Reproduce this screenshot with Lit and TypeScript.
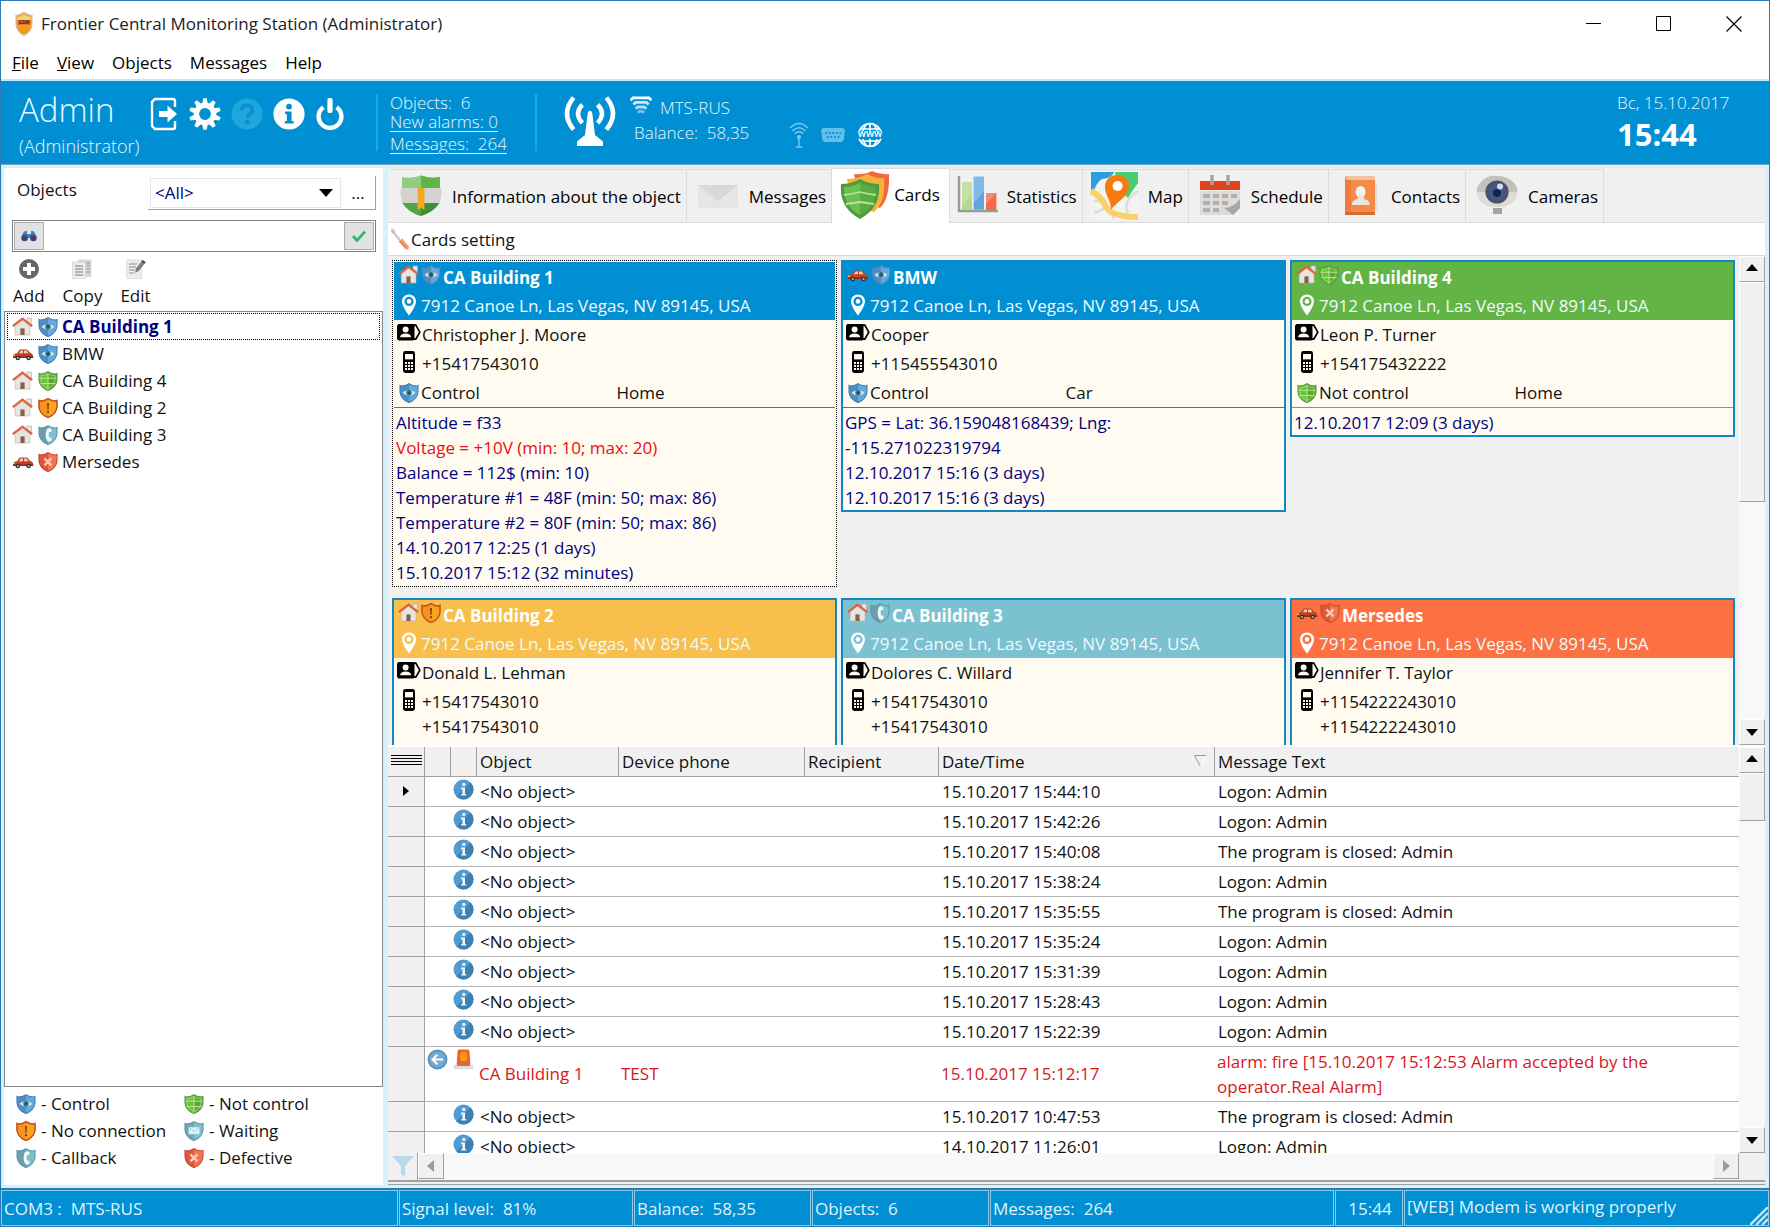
import { LitElement, html, css, svg, nothing, TemplateResult } from "lit";
import { customElement, property, state } from "lit/decorators.js";
import { classMap } from "lit/directives/class-map.js";

type Status = "control" | "free" | "lost" | "waiting" | "callback" | "defective";
type Kind = "home" | "car";

/* ---------- icons ---------- */

const icon = (w: number, h: number, box: string, body: unknown) =>
  html`<svg width=${w} height=${h} viewBox=${box} aria-hidden="true">${body}</svg>`;

const shieldTones: Record<Status, [string, string, string]> = {
  control: ["#4a8fc6", "#63a9df", "#4381b3"],
  free: ["#6cc13c", "#5aa92f", "#5d9a48"],
  lost: ["#f7941d", "#f9a51f", "#c65f1c"],
  waiting: ["#6fa9b6", "#7fc0d0", "#5a96a5"],
  callback: ["#6b9fae", "#7cc0d0", "#5f97a6"],
  defective: ["#e0563a", "#f5744e", "#c04a30"],
};

const outline = "M2 3C5 3 8 2 10 .6C12 2 15 3 18 3L19 2.4V9C18.6 14 15 17.6 10 19.6C5 17.6 1.4 14 1 9V2.4Z";
const half = "M10 .6C8 2 5 3 2 3L1 2.4V9C1.4 14 5 17.6 10 19.6Z";

const shieldMark = (status: Status) => {
  switch (status) {
    case "control":
      return svg`<path d="M3.6 9.8C6 6.4 14 6.4 16.4 9.8C14 13.2 6 13.2 3.6 9.8Z" fill="#cfe6ee"/>
        <circle cx="10" cy="9.8" r="2.7" fill="#35707c"/><circle cx="10" cy="9.8" r="1" fill="#1d4650"/>`;
    case "free":
      return svg`<path d="M1.5 7.2H18.5M2.4 12.6H17.6M10 2V19" stroke="#bfe79b" stroke-width="1" fill="none"/>
        <path d="M3 4.6C6 4.6 8 3.8 10 2.6C12 3.8 14 4.6 17 4.6V9C16.6 13 14 16 10 17.6C6 16 3.4 13 3 9Z" stroke="#a6dc7c" stroke-width=".8" fill="none"/>`;
    case "lost":
      return svg`<path d="M9.1 5H11L10.6 12H9.5Z" fill="#8a3d12"/><circle cx="10.1" cy="14.2" r="1.1" fill="#8a3d12"/>
        <path d="${outline}" fill="none" stroke="#c4571b" stroke-width="1.3"/>`;
    case "waiting":
      return svg`<path d="M4.6 6.2H15.4V13.2H4.6Z" fill="#e2f0f8"/><path d="M4.6 6.2L10 10.4L15.4 6.2" fill="none" stroke="#a9cfe0"/>`;
    case "callback":
      return svg`<path d="M9.6 3.4H12.6Q13.4 3.4 13.4 4.4V6Q13.4 7 12.4 7H11Q10.2 9.8 11 12.6H12.4Q13.4 12.6 13.4 13.6V15.2Q13.4 16.2 12.6 16.2H9.6Q8 15 7.6 9.8Q8 4.6 9.6 3.4Z" fill="#eef7fa"/>`;
    default:
      return svg`<path d="M6.4 6.4L13.4 13.4M13.4 6.4L6.4 13.4" stroke="#f9c9b8" stroke-width="2.4"/>`;
  }
};

const shield = (status: Status, size = 20) => {
  const [dark, light, edge] = shieldTones[status];
  return icon(size, size, "0 0 20 20", svg`
    <path d=${outline} fill=${light}/><path d=${half} fill=${dark}/>
    <path d=${outline} fill="none" stroke=${edge} stroke-width="1.1"/>${shieldMark(status)}`);
};

const house = () => icon(21, 20, "0 0 21 20", svg`
  <path d="M15 1H19.4V9H15Z" fill="#e9e6e6" stroke="#b9b2b2" stroke-width=".8"/>
  <path d="M3.2 9L10.5 3L18 9V18H3.2Z" fill="#e8e4e0" stroke="#bcb4ae" stroke-width=".6"/>
  <path d="M8.4 11.4H12.6V18H8.4Z" fill="#84614a"/>
  <path d="M.8 9.2L10.5 1.6L20.2 9.2" fill="none" stroke="#e0623f" stroke-width="2.3"/>`);

const car = () => icon(22, 20, "0 0 22 20", svg`
  <path d="M1 12.4Q1.4 9.6 5 9.2L7.6 5.4H15L18.4 9Q21.4 9.6 21.2 13.6H1Z" fill="#c2401f"/>
  <path d="M1 12.4H21.2V14H1Z" fill="#8e2a14"/>
  <path d="M6.8 9.2L8.6 6.5H11V9.2ZM12 6.5H14.6L16.6 9.2H12Z" fill="#f2c9bd"/>
  <circle cx="5.8" cy="14" r="2.3" fill="#333"/><circle cx="16.6" cy="14" r="2.3" fill="#333"/>
  <circle cx="5.8" cy="14" r="1" fill="#bbb"/><circle cx="16.6" cy="14" r="1" fill="#bbb"/>
  <path d="M1 10.4H3V12H1Z" fill="#f7c13a"/>`);

const kindIcon = (kind: Kind) => (kind === "home" ? house() : car());

const pin = () => icon(16, 22, "0 0 16 22", svg`
  <path fill-rule="evenodd" d="M8 .5C3.8 .5 1 3.6 1 7.4C1 12.4 8 21.5 8 21.5S15 12.4 15 7.4C15 3.6 12.2 .5 8 .5ZM8 2.8A4.6 4.6 0 1 1 8 12A4.6 4.6 0 0 1 8 2.8Z" fill="#fff"/>
  <circle cx="8" cy="7.4" r="2.3" fill="#fff"/>`);

const badge = () => icon(24, 17, "0 0 24 17", svg`
  <path d="M1.5 0H16.4L17.5 .6V15.6L16.4 16.5H1.5L0 15V1.5Z" fill="#000"/>
  <circle cx="8.6" cy="5.6" r="3" fill="#fffbf0"/><path d="M3 13.2Q3.4 9.4 8.6 9.4T14.2 13.2Z" fill="#fffbf0"/>
  <path d="M17 1.2H18.8L22.8 8.2L18.8 15.2H17" fill="none" stroke="#000" stroke-width="1.7"/>`);

const handset = () => icon(12, 22, "0 0 12 22", svg`
  <rect width="12" height="22" rx="2.4" fill="#000"/><rect x="2" y="3" width="8" height="5.4" fill="#fffbf0"/>
  <path d="M2 11H4V13H2ZM5 11H7V13H5ZM8 11H10V13H8ZM2 14H4V16H2ZM5 14H7V16H5ZM8 14H10V16H8ZM2 17H4V19H2ZM5 17H7V19H5ZM8 17H10V19H8Z" fill="#fffbf0"/>`);

const infoDot = () => icon(21, 21, "0 0 21 21", svg`
  <circle cx="10.5" cy="10.5" r="10" fill="#4f9bd2"/><path d="M3.4 17.6A10 10 0 0 0 17.6 3.4Z" fill="#3f80b1"/>
  <circle cx="10.8" cy="5.4" r="1.7" fill="#e9f4fb"/><path d="M8 8.6H12V15H13.2V16.6H8.2V15H9.4V10.2H8Z" fill="#e9f4fb"/>`);

const replyDot = () => icon(21, 21, "0 0 21 21", svg`
  <circle cx="10.5" cy="10.5" r="10" fill="#5b97c4"/><circle cx="10.5" cy="10.5" r="7.8" fill="#74abd3"/>
  <path d="M16 10.5H6M10.4 5.8L5.6 10.5L10.4 15.2" fill="none" stroke="#fff" stroke-width="2.1"/>`);

const siren = () => icon(21, 21, "0 0 21 21", svg`
  <path d="M3.6 15.4L4.6 2Q4.8 .6 6.6 .6H14.4Q16.2 .6 16.4 2L17.4 15.4Z" fill="#f0641e"/>
  <path d="M10.5 3Q14 3 14 7T13 12H8Q7 11 7 7T10.5 3Z" fill="#fb9a1c"/>
  <path d="M.8 15.6H20.2V20.2H.8Z" fill="#dedede"/><path d="M4 15.4H17V16.6H4Z" fill="#b7321a"/>`);

const appLogo = () => icon(20, 24, "0 0 20 24", svg`
  <path d="M10 .6Q14 3.4 18 3.4V12Q17.4 20 10 23.4Q2.6 20 2 12V3.4Q6 3.4 10 .6Z" fill="#f59a1b" stroke="#c9c2b4" stroke-width="1.2"/>
  <path d="M10 2.4Q13.4 4.6 16.8 4.8V9H3.2V4.8Q6.6 4.6 10 2.4Z" fill="#f7cf7a"/>
  <path d="M3.2 8H16.8V13H3.2Z" fill="#e8762a"/>
  <text x="10" y="12.4" text-anchor="middle" font-size="5" font-weight="700" font-family="Open Sans, sans-serif" fill="#3a1a10">GSM</text>`);

const exitIcon = () => icon(28, 34, "0 0 28 34", svg`
  <path d="M25 10V4Q25 2 23 2H5L2 5V29L5 32H23Q25 32 25 30V24" fill="none" stroke="#fff" stroke-width="2.4"/>
  <path d="M9 14H17.5V8.6L27 17L17.5 25.4V20H9Z" fill="#fff"/>`);

const gearIcon = () => icon(32, 32, "-16 -16 32 32", svg`
  <circle r="8.6" fill="none" stroke="#fff" stroke-width="5.4"/>
  ${Array.from({ length: 10 }, (_, i) => svg`<path d="M-2.8 -10L-1.7 -15.8H1.7L2.8 -10Z" fill="#fff" transform="rotate(${i * 36})"/>`)}`);

const helpIcon = () => icon(32, 32, "0 0 32 32", svg`
  <circle cx="16" cy="16" r="15.6" fill="#1fa7dd"/>
  <path d="M10.6 12Q10.6 7.4 16 7.4T21.4 12Q21.4 14.4 18.4 16.2Q16.6 17.2 16.6 19.8" fill="none" stroke="#0b90d2" stroke-width="3.8"/>
  <circle cx="16.4" cy="24.2" r="2.5" fill="#0b90d2"/>`);

const aboutIcon = () => icon(32, 32, "0 0 32 32", svg`
  <circle cx="16" cy="16" r="15.6" fill="#fff"/><circle cx="16" cy="8.6" r="2.9" fill="#008fd3"/>
  <path d="M12 13.4H18.6V23H20.6V25.6H11.8V23H13.8V16H12Z" fill="#008fd3"/>`);

const powerIcon = () => icon(28, 32, "0 0 28 32", svg`
  <path d="M7.4 9.2A11.4 11.4 0 1 0 20.6 9.2" fill="none" stroke="#fff" stroke-width="4.4"/>
  <rect x="11.4" width="5.2" height="15" rx="2" fill="#fff"/>`);

const towerIcon = () => icon(52, 52, "0 0 52 52", svg`
  <g fill="none" stroke="#fff"><path d="M9.6 2.6Q-3.6 18.6 9.6 34.6M42.4 2.6Q55.6 18.6 42.4 34.6" stroke-width="4.6"/>
  <path d="M18.4 9.6Q9.6 18.6 18.4 28M33.6 9.6Q42.4 18.6 33.6 28" stroke-width="4.4"/></g>
  <path d="M23.6 19Q24 15.8 26 15.8T28.4 19L31 40L39 46.6V51H13V46.6L21 40Z" fill="#fff"/>`);

const waveIcon = () => icon(22, 20, "0 0 22 20", svg`
  <g fill="none" stroke="#fff" stroke-width="2.8"><path d="M.6 5.4L3 2.8H19L21.4 5.4"/><path d="M3.4 9.6L5.6 7.4H16.4L18.6 9.6" opacity=".8"/>
  <path d="M5.6 13.8L7.6 12H14.4L16.4 13.8" opacity=".7"/><path d="M7.8 17.8L9.4 16.4H12.6L14.2 17.8" opacity=".45"/></g>`);

const antennaIcon = () => icon(20, 26, "0 0 20 26", svg`
  <g fill="none" stroke="#78c8ec" stroke-width="1.4"><path d="M1 6Q10 -3 19 6M3.4 9Q10 2.4 16.6 9M5.8 11.8Q10 7.6 14.2 11.8"/><path d="M10 15V25M6.6 25H13.4"/></g>
  <circle cx="10" cy="15" r="2" fill="#78c8ec"/>`);

const serialIcon = () => icon(24, 14, "0 0 24 14", svg`
  <path d="M2 0H22L24 2L22.6 12L20.6 14H3.4L1.4 12L0 2Z" fill="#62bfea"/>
  <g fill="#008fd3">${[4, 7.6, 11.2, 14.8, 18.4].map((x) => svg`<rect x=${x} y="4" width="1.8" height="1.8"/>`)}
  ${[5.8, 9.4, 13, 16.6].map((x) => svg`<rect x=${x} y="8" width="1.8" height="1.8"/>`)}</g>`);

const globeIcon = () => icon(26, 26, "0 0 26 26", svg`
  <g fill="none" stroke="#fff" stroke-width="1.6"><circle cx="13" cy="13" r="11.4"/><path d="M13 2V24M9.6 2Q6 7 6 9M16.4 2Q20 7 20 9M9.6 24Q6 19 6 17M16.4 24Q20 19 20 17M3.6 7H22.4M3.6 19H22.4"/></g>
  <rect y="9" width="26" height="7.6" fill="#008fd3"/>
  <text x="13" y="15.4" text-anchor="middle" font-size="10" font-weight="600" font-family="Open Sans, sans-serif" fill="#fff">www</text>`);

const binoculars = () => icon(16, 12, "0 0 16 12", svg`
  <path d="M2 3L4 1H6V4H10V1H12L14 3L15.6 8H.4Z" fill="#3f7fc4"/><circle cx="3.6" cy="8" r="3.3" fill="#2c4d86"/><circle cx="12.4" cy="8" r="3.3" fill="#2c4d86"/>
  <circle cx="3.6" cy="8.4" r="1.5" fill="#6b3030"/><circle cx="12.4" cy="8.4" r="1.5" fill="#6b3030"/>`);

const check = () => icon(14, 12, "0 0 14 12", svg`<path d="M1 6L5 10.4L13 1.6" fill="none" stroke="#2fb46c" stroke-width="2.8"/>`);

const plusDot = () => icon(20, 20, "0 0 20 20", svg`
  <circle cx="10" cy="10" r="10" fill="#666"/><path d="M10 4V16M4 10H16" stroke="#fff" stroke-width="4"/>`);

const copyIcon = () => icon(20, 20, "0 0 20 20", svg`
  <path d="M6 .6H19.4V18H6Z" fill="#d6d6d6"/><path d="M14.6 4H18M14.6 7H18M14.6 10H18M14.6 13H18" stroke="#a5a5a5" stroke-width="1.4"/>
  <path d="M.6 3H13.4V20H.6Z" fill="#ededed" stroke="#d2d2d2" stroke-width=".8"/><path d="M3 7H11M3 10H11M3 13H11M3 16H11" stroke="#9d9d9d" stroke-width="1.3"/>`);

const editIcon = () => icon(20, 20, "0 0 20 20", svg`
  <path d="M.6 1H15.4V19.6H.6Z" fill="#ededed" stroke="#d8d8d8" stroke-width=".8"/><path d="M3 5H11M3 8H10M3 11H9M3 14H8" stroke="#adadad" stroke-width="1.3"/>
  <path d="M9 13.8L10 9.6L16.6 1L19.6 3.2L12.8 12Z" fill="#7d7d7d"/><path d="M15.4 2.6L18.4 4.8L19.6 3.2L16.6 1Z" fill="#4c4c4c"/>`);

const screwdriver = () => icon(20, 22, "0 0 20 22", svg`
  <path d="M.8 1.6L2.4 .6L5 2.4L5.4 5L10.6 11.6L9 12.8L3.8 6.2L1.6 5Z" fill="#c9c4bd"/>
  <path d="M8.4 13.4L12.2 10.4L18.8 18.4Q19.6 20.6 17.6 21.4Q16 21.8 15 20.8Z" fill="#f29b6c"/><path d="M10.6 13.4L16.4 20.4" stroke="#d9774a"/>`);

/* Tab pictures share one drawing area, the stacked shields and the map are larger */
const tabShield = () => icon(42, 42, "0 0 42 42", svg`
  <path d="M2 2Q12 4 21 .6Q30 4 40 2V13H2Z" fill="#8fce7f"/><path d="M21 .6Q30 4 40 2V13H21Z" fill="#5fb548"/>
  <path d="M2 13H40Q42 14 41.4 20L40 28H2L.6 20Q0 14 2 13Z" fill="#d5d3d0"/><path d="M2.6 28H39.4Q34 37 21 41Q8 37 2.6 28Z" fill="#3d8f3a"/>
  <path d="M2.6 28H21V41Q8 37 2.6 28Z" fill="#4fa646"/>
  <path d="M17.6 13H24.4V35L21 33L17.6 35Z" fill="#f5a81c"/>`);
const tabMail = () => icon(42, 42, "0 0 42 42", svg`
  <path d="M1 10H41V33H1Z" fill="#e6e5e3"/><path d="M1 10L21 26L41 10Z" fill="#d9d8d6"/><path d="M1 33L16 21M41 33L26 21" stroke="#f0efee"/>`);
const tabCards = () => icon(50, 50, "0 0 50 50", svg`
  <path d="M14 4Q24 5 32 1Q40 5 49 4Q50 28 40 38L20 30Z" fill="#f0683c"/>
  <path d="M7 9Q18 9 27 4Q36 9 44 8Q46 32 34 42L12 34Z" fill="#f9b13c"/>
  <path d="M1 14Q11 14 20 9Q29 14 39 14Q41 38 20 49Q-1 38 1 14Z" fill="#4d9d3f"/>
  <path d="M4 17Q13 17 20 12.6V45Q4 37 4 17Z" fill="#6cc04f"/><path d="M36 17Q27 17 20 12.6V45Q36 37 36 17Z" fill="#58ac42"/>
  <path d="M4 25Q13 24 20 22Q27 24 36 25M6 34Q14 33 20 32Q26 33 34 34" stroke="#b9e39c" stroke-width="1.8" fill="none"/>`);
const tabStats = () => icon(42, 42, "0 0 42 42", svg`
  <path d="M2 1V36H41" fill="none" stroke="#9a9a9a" stroke-width="2.4"/><rect x="5" y="7" width="10" height="28" fill="#b4d98a"/>
  <rect x="16.6" y="1.6" width="10.4" height="33" fill="#5fa6df"/><rect x="29" y="18" width="10.4" height="17" fill="#f2694d"/>
  <path d="M5 7H15V20L5 30ZM16.6 1.6H27V16L16.6 28ZM29 18H39.4L29 29Z" fill="#fff" opacity=".22"/>`);
const tabMap = () => icon(50, 50, "0 0 50 50", svg`
  <rect x="1" y="1" width="47" height="48" rx="2" fill="#f3f3f0"/><path d="M1 1H24Q22 7 12 8Q6 12 4 20L1 20Z" fill="#2aa0e0"/>
  <path d="M25 1H48V12Q42 20 38 27L28 18Z" fill="#46cf72"/><path d="M4 30Q20 30 24 48M48 20Q32 30 38 42M4 42L18 36" stroke="#dcdcd8" stroke-width="2.6" fill="none"/>
  <path d="M1 20Q12 26 16 36Q22 46 48 46" fill="none" stroke="#fbd06b" stroke-width="6"/>
  <path d="M27 4C19 4 15 10 15 16C15 25 21 28 21 39C27 30 39 26 39 15C39 8 34 4 27 4Z" fill="#f77a0e"/><circle cx="27.6" cy="15" r="5" fill="#fff"/>`);
const tabSchedule = () => icon(42, 42, "0 0 42 42", svg`
  <path d="M1 6H41V15H1Z" fill="#e2421a"/><path d="M1 16H41V33L34 40H1Z" fill="#dddcda"/>
  <path d="M13 0V10M29 0V10" stroke="#a5a3a0" stroke-width="3.4"/>
  <path d="M4 19H11V23H4ZM14 19H20V23H14ZM23 19H29V23H23ZM32 19H38V23H32ZM4 26H11V30H4ZM14 26H20V30H14ZM23 26H29V30H23ZM4 33H11V37H4ZM14 33H20V37H14Z" fill="#b3b0ad"/>
  <path d="M41 24V33L34 40L25 33Q34 33 41 24Z" fill="#a8a5a2"/>`);
const tabContacts = () => icon(42, 42, "0 0 42 42", svg`
  <path d="M35 8H38V16H35ZM35 18H38V26H35ZM35 28H38V36H35Z" fill="#ddd"/><path d="M6 2Q6 1 9 1H36V40H6Z" fill="#ef7c3a"/>
  <path d="M6 2L9 1H36V5H8Z" fill="#f5c2a0"/><path d="M12 5H36V40H12Z" fill="#f58b49"/><path d="M6 37H36V40H6Z" fill="#d9692c"/>
  <ellipse cx="21.6" cy="17" rx="5" ry="6" fill="#f5f2ef"/><path d="M12.6 30Q13 25 18.6 24L19 20H24.4L25 24Q30.6 25 31 30Z" fill="#e9e6e2"/>`);
const tabCamera = () => icon(42, 42, "0 0 42 42", svg`
  <path d="M.6 17Q0 12 6 6T21 1Q30 1 36 6T41.4 17Z" fill="#c3c1be"/><path d="M.6 17H41.4Q41 27 28 32H14Q1 27 .6 17Z" fill="#dedbd7"/>
  <circle cx="21" cy="17" r="11.6" fill="#4b5068"/><circle cx="21" cy="17" r="8.4" fill="#3d5a90"/><circle cx="21" cy="18" r="4" fill="#18233f"/><circle cx="24" cy="11.6" r="3" fill="#d4dcec"/>
  <path d="M17 33H26V39H17Z" fill="#a5a5a0"/>`);

const arrow = (dir: "up" | "down" | "left" | "right", color = "#000") => {
  const d = { up: "M0 8L6 1L12 8Z", down: "M0 3L6 10L12 3Z", left: "M9 0L2 6L9 12Z", right: "M3 0L10 6L3 12Z" }[dir];
  return icon(12, 12, "0 0 12 12", svg`<path d=${d} fill=${color}/>`);
};

/* ---------- shared look ---------- */

const base = css`
  * { box-sizing: border-box; }
  svg { display: block; flex: none; }
  button, input, select { font: inherit; color: inherit; margin: 0; padding: 0; border: 0; background: none; border-radius: 0; }
  ul, dl, dd, p, h1, h2 { margin: 0; padding: 0; list-style: none; font: inherit; }
  a { color: inherit; }
`;

/* ---------- scroll bar ---------- */

@customElement("scroll-rail")
class ScrollRail extends LitElement {
  @property() axis: "y" | "x" = "y";
  /** Share of the rail taken by the thumb, in percent; 0 hides it. */
  @property({ type: Number }) thumb = 0;

  static styles = [base, css`
    :host { display: flex; min-width: 0; min-height: 0; }
    .rail { flex: 1; display: flex; flex-direction: column; background: #f8f8f8; min-width: 0; }
    .rail.x { flex-direction: row; }
    button { width: 26px; height: 26px; flex: none; display: grid; place-items: center; background: #f0f0f0; border: 1px solid #fff; border-right-color: #a0a0a0; border-bottom-color: #a0a0a0; }
    .thumb { background: #f0f0f0; border: 1px solid #fff; border-right-color: #a0a0a0; border-bottom-color: #a0a0a0; }
    .space { flex: 1; }
  `];

  render() {
    const y = this.axis === "y";
    const ink = y ? "#000" : "#9b9b9b";
    return html`<div class=${classMap({ rail: true, x: !y })}>
      <button aria-label=${y ? "Scroll up" : "Scroll left"}>${arrow(y ? "up" : "left", ink)}</button>
      ${this.thumb ? html`<div class="thumb" style="flex: 0 0 ${this.thumb}%"></div>` : nothing}
      <div class="space"></div>
      <button aria-label=${y ? "Scroll down" : "Scroll right"}>${arrow(y ? "down" : "right", ink)}</button>
    </div>`;
  }
}

/* ---------- object card ---------- */

interface Monitored {
  name: string; kind: Kind; status: Status; owner: string; phones: string[];
  state?: string; place?: string; details: { text: string; bad?: boolean }[];
}

@customElement("object-card")
class ObjectCard extends LitElement {
  @property({ attribute: false }) item!: Monitored;
  @property({ type: Boolean }) current = false;

  static styles = [base, css`
    :host { display: block; min-width: 0; }
    .card { background: #fffbf0; border: 2px solid #1388c0; color: #111; font-size: 17px; }
    .card.current { border: 1px dotted #000; padding: 1px; }
    .head { color: #fff; }
    .control { background: #008fd3; }
    .free { background: #62b444; }
    .lost { background: #f8bf4c; }
    .callback { background: #7cc1cf; }
    .defective { background: #fd7041; }
    .row { display: flex; height: 29px; line-height: 29px; padding-left: 2px; white-space: nowrap; overflow: hidden; }
    .title { gap: 2px; padding-left: 4px; font-weight: 700; line-height: 31px; }
    .title svg { margin-top: 3px; }
    .address { color: #eefaff; }
    .mark { width: 25px; flex: none; display: grid; place-items: center; }
    .mark.wide { width: 26px; padding-bottom: 4px; }
    .address .mark { padding-bottom: 2px; }
    .state { display: grid; grid-template-columns: 1fr 1fr; padding-left: 0; }
    .state span { display: flex; padding-left: 2px; }
    .phones { display: flex; padding-left: 2px; min-height: 29px; }
    .phones .mark { height: 29px; }
    .phones ul { padding: 2px 0; line-height: 25px; }
    .details { border-top: 1px solid #1388c0; padding: 2px 2px 0; color: #000080; line-height: 25px; white-space: pre-line; }
    .details.green { border-color: #62b444; }
    .bad { color: #e81010; }
  `];

  render() {
    const o = this.item;
    return html`<article class=${classMap({ card: true, current: this.current })}>
      <div class="head ${o.status}">
        <h2 class="row title">${kindIcon(o.kind)}${shield(o.status)}<span>${o.name}</span></h2>
        <p class="row address"><span class="mark">${pin()}</span>7912 Canoe Ln, Las Vegas, NV 89145, USA</p>
      </div>
      <p class="row"><span class="mark wide">${badge()}</span>${o.owner}</p>
      <div class="phones"><span class="mark wide">${handset()}</span><ul>${o.phones.map((p) => html`<li>${p}</li>`)}</ul></div>
      <div class="row state"><span><i class="mark">${shield(o.status)}</i>${o.state ?? nothing}</span><span>${o.place ?? nothing}</span></div>
      <ul class=${classMap({ details: true, green: o.status === "free" })}>${o.details.map((d) => html`<li class=${classMap({ bad: !!d.bad })}>${d.text}</li>`)}</ul>
    </article>`;
  }
}

/* ---------- data ---------- */

const objects: Monitored[] = [
  { name: "CA Building 1", kind: "home", status: "control", owner: "Christopher J. Moore", phones: ["+15417543010"], state: "Control", place: "Home",
    details: [{ text: "Altitude = f33" }, { text: "Voltage = +10V (min: 10; max: 20)", bad: true }, { text: "Balance = 112$ (min: 10)" },
      { text: "Temperature #1 = 48F (min: 50; max: 86)" }, { text: "Temperature #2 = 80F (min: 50; max: 86)" },
      { text: "14.10.2017 12:25 (1 days)" }, { text: "15.10.2017 15:12 (32 minutes)" }] },
  { name: "BMW", kind: "car", status: "control", owner: "Cooper", phones: ["+115455543010"], state: "Control", place: "Car",
    details: [{ text: "GPS = Lat: 36.159048168439; Lng:\n-115.271022319794" }, { text: "12.10.2017 15:16 (3 days)" }, { text: "12.10.2017 15:16 (3 days)" }] },
  { name: "CA Building 4", kind: "home", status: "free", owner: "Leon P. Turner", phones: ["+154175432222"], state: "Not control", place: "Home",
    details: [{ text: "12.10.2017 12:09 (3 days)" }] },
  { name: "CA Building 2", kind: "home", status: "lost", owner: "Donald L. Lehman", phones: ["+15417543010", "+15417543010"], details: [] },
  { name: "CA Building 3", kind: "home", status: "callback", owner: "Dolores C. Willard", phones: ["+15417543010", "+15417543010"], details: [] },
  { name: "Mersedes", kind: "car", status: "defective", owner: "Jennifer T. Taylor", phones: ["+1154222243010", "+1154222243010"], details: [] },
];

interface Message { object: string; phone?: string; time: string; text: string; alarm?: boolean }
const plain = (time: string, text = "Logon: Admin"): Message => ({ object: "<No object>", time, text });
const closed = "The program is closed: Admin";
const messages: Message[] = [
  plain("15.10.2017 15:44:10"), plain("15.10.2017 15:42:26"), plain("15.10.2017 15:40:08", closed),
  plain("15.10.2017 15:38:24"), plain("15.10.2017 15:35:55", closed), plain("15.10.2017 15:35:24"),
  plain("15.10.2017 15:31:39"), plain("15.10.2017 15:28:43"), plain("15.10.2017 15:22:39"),
  { object: "CA Building 1", phone: "TEST", time: "15.10.2017 15:12:17", alarm: true,
    text: "alarm: fire [15.10.2017 15:12:53 Alarm accepted by the\noperator.Real Alarm]" },
  plain("15.10.2017 10:47:53", closed), plain("14.10.2017 11:26:01"),
];

const tabs: [string, () => TemplateResult][] = [
  ["Information about the object", tabShield], ["Messages", tabMail], ["Cards", tabCards], ["Statistics", tabStats],
  ["Map", tabMap], ["Schedule", tabSchedule], ["Contacts", tabContacts], ["Cameras", tabCamera],
];

const legend: [Status, string][] = [
  ["control", "Control"], ["free", "Not control"], ["lost", "No connection"],
  ["waiting", "Waiting"], ["callback", "Callback"], ["defective", "Defective"],
];

/* ---------- window ---------- */

@customElement("app-root")
class AppRoot extends LitElement {
  @state() private selected = 0;
  @state() private tab = "Cards";

  static styles = [base, css`
    :host { display: block; height: 100vh; font-family: "Open Sans", "Noto Sans", sans-serif; font-size: 17px; color: #111; }
    .window { height: 100%; display: flex; flex-direction: column; border: 1px solid #2a78b4; background: #fff; overflow: hidden; }

    .titlebar { display: flex; align-items: center; height: 45px; padding-left: 13px; gap: 7px; flex: none; }
    .titlebar h1 { flex: 1; color: #222; }
    .controls { display: flex; }
    .controls button { width: 70px; height: 44px; display: grid; place-items: center; }
    .menu { display: flex; gap: 18px; height: 35px; padding: 0 11px; align-items: center; border-bottom: 2px solid #c4e6f6; flex: none; color: #000; }

    .banner { display: flex; height: 84px; flex: none; background: #008fd3; color: #e8f7ff; border-bottom: 1px solid #7aa5bd; padding: 0 36px 0 18px; font-weight: 300; }
    .user { width: 130px; padding-top: 8px; }
    .user h2 { font-size: 33px; line-height: 42px; }
    .user p { line-height: 31px; font-size: 18px; }
    .quick { display: flex; gap: 10px; align-items: center; height: 66px; width: 227px; }
    .quick button { display: grid; place-items: center; min-width: 30px; }
    .counters { border: solid #12aeea; border-width: 0 2px; height: 57px; margin-top: 13px; width: 161px; padding-left: 12px; line-height: 22px; white-space: pre; }
    .counters > * { display: block; margin: 0; }
    .counters a { text-underline-offset: 3px; }
    .counters li:first-child { line-height: 17px; }
    .modem { display: flex; padding: 14px 0 0 27px; gap: 14px; flex: 1; }
    .modem dl { line-height: 25px; white-space: pre; }
    .modem dt { display: flex; gap: 8px; }
    .modem dd { padding-left: 4px; }
    .links { display: flex; gap: 12px; align-items: center; align-self: flex-end; height: 26px; margin: 0 0 16px 26px; }
    .clock { width: 116px; padding-top: 12px; line-height: 20px; }
    .clock p:last-child { font-size: 31px; line-height: 42px; font-weight: 700; color: #fff; }

    .work { flex: 1; min-height: 0; display: flex; background: #d8f0fc; padding: 3px 4px 3px 2px; gap: 5px; }
    .side { width: 379px; flex: none; background: #fff; display: flex; flex-direction: column; margin-left: 1px; }
    .filter { display: flex; padding: 8px 7px 0 13px; height: 42px; line-height: 28px; }
    .filter label { width: 131px; }
    .combo { flex: 1; display: flex; border: solid #a0a0a0; border-width: 0 1px 1px 0; }
    .pick { flex: 1; display: grid; border: 1px solid #e6e6ee; margin: 2px 0 1px 2px; align-items: center; }
    .pick select { grid-area: 1 / 1; appearance: none; width: 100%; height: 28px; padding-left: 4px; color: #000080; }
    .pick svg { grid-area: 1 / 1; justify-self: end; margin-right: 7px; pointer-events: none; }
    .more { width: 34px; }
    .search { display: flex; margin: 10px 7px 0 8px; height: 32px; border: 1px solid #808080; padding: 1px; }
    .search input { flex: 1; min-width: 0; padding: 0 4px; outline: none; }
    .search button { width: 30px; background: #e1e1e1; border: 1px solid #adadad; display: grid; place-items: center; }
    .tools { display: flex; height: 59px; padding: 7px 9px 0; gap: 18px; }
    .tools button { display: grid; justify-items: center; align-content: start; line-height: 34px; }
    .list { flex: 1; border: 1px solid #828790; padding: 1px 2px; }
    .list button { display: flex; align-items: center; width: 100%; height: 27px; padding-left: 4px; gap: 4px; border: 1px solid transparent; }
    .list button.on { border: 1px dotted #000; color: #000080; font-weight: 700; }
    .kind { width: 22px; }
    .legend { display: grid; grid-template-columns: 168px 1fr; grid-auto-rows: 27px; padding: 3px 12px; height: 98px; align-items: center; }
    .legend li { display: flex; align-items: center; gap: 5px; white-space: nowrap; }

    .main { flex: 1; min-width: 0; display: grid; grid-template-rows: 55px 33px minmax(0, 488fr) minmax(0, 440fr); background: #f0f0f0; }
    .tabs { display: flex; align-items: flex-end; border-bottom: 1px solid #dcdcdc; padding-left: 2px; background: #f0f0f0; }
    .tabs button { display: flex; align-items: center; height: 53px; gap: 10px; padding: 0 5px 0 10px; border: 1px solid #dcdcdc; border-width: 1px 1px 0 0; white-space: nowrap; color: #000; }
    .tabs button.on { height: 55px; background: #fff; gap: 4px; padding: 0 9px 3px 8px; margin-bottom: -1px; }
    .tabs button.tight { padding-left: 7px; gap: 8px; }
    .setting { display: flex; align-items: center; background: #fff; border-bottom: 1px solid #d9d9d9; padding-left: 2px; }
    .setting button { display: flex; align-items: center; gap: 1px; }
    .deck { display: flex; min-height: 0; overflow: hidden; background: #f0f0f0; }
    .cards { flex: 1; min-width: 0; display: grid; grid-template-columns: repeat(3, minmax(0, 1fr)); align-content: start; align-items: start; gap: 11px 4px; padding: 4px 4px 0; overflow: hidden; }
    .deck scroll-rail, .log > scroll-rail { width: 26px; flex: none; }

    .bottom { display: flex; flex-direction: column; min-height: 0; border-top: 2px solid #fff; border-bottom: 1px solid #a0a0a0; }
    .log { flex: 1; display: flex; min-height: 0; }
    .sheet { flex: 1; min-width: 0; overflow: hidden; background: #fff; }
    table { width: 100%; table-layout: fixed; border-collapse: separate; border-spacing: 0; }
    th { height: 30px; background: #f0f0f0; font-weight: 400; text-align: left; padding: 0 3px; border-right: 1px solid #a0a0a0; border-bottom: 1px solid #a0a0a0; white-space: nowrap; }
    th:last-child { border-right: 0; }
    .sorted { display: flex; justify-content: space-between; align-items: center; padding-right: 4px; }
    td { height: 30px; padding: 0 3px; border-bottom: 1px solid #b4b4b4; line-height: 25px; vertical-align: middle; white-space: pre-line; }
    td.grip { background: #f0f0f0; border-right: 1px solid #a0a0a0; border-bottom-color: #a0a0a0; }
    td.grip svg { margin: auto; }
    td.pic { padding: 2px 3px 2px 0; vertical-align: top; }
    td.pic svg { margin-left: auto; }
    tr.alarm td { height: 55px; color: #d9161c; padding-left: 2px; }
    .c0 { width: 37px; } .c1 { width: 26px; } .c2 { width: 26px; } .c3 { width: 142px; }
    .c4 { width: 186px; } .c5 { width: 134px; } .c6 { width: 276px; }
    .pan { display: flex; height: 29px; border-bottom: 2px solid #a0a0a0; margin-bottom: 2px; padding-right: 26px; flex: none; }
    .pan scroll-rail { flex: 1; }
    .funnel { width: 30px; display: grid; place-items: center; border: solid #a0a0a0; border-width: 0 1px 0 0; }

    .status { display: grid; grid-template-columns: 398fr 235fr 178fr 178fr 345fr 69fr 365fr; height: 38px; flex: none; background: #008fd3; border-top: 2px solid #1a83b2; color: #dff3fd; line-height: 36px; white-space: pre; }
    .status span { border: 1px solid #8ecbea; margin-right: 1px; padding-left: 2px; overflow: hidden; }
    .status .time { text-align: center; }
    .status .end { display: flex; justify-content: space-between; align-items: flex-end; margin: 0; }
  `];

  private header() {
    return html`
      <header class="titlebar">${appLogo()}<h1>Frontier Central Monitoring Station (Administrator)</h1>
        <div class="controls">
          <button aria-label="Minimize">${icon(16, 16, "0 0 16 16", svg`<path d="M0 7.5H15" stroke="#000"/>`)}</button>
          <button aria-label="Maximize">${icon(16, 16, "0 0 16 16", svg`<path d="M.5 .5H14.5V14.5H.5Z" fill="none" stroke="#000"/>`)}</button>
          <button aria-label="Close">${icon(16, 16, "0 0 16 16", svg`<path d="M.5 .5L15.5 15.5M15.5 .5L.5 15.5" stroke="#000" stroke-width="1.2"/>`)}</button>
        </div>
      </header>
      <nav class="menu"><button><u>F</u>ile</button><button><u>V</u>iew</button><button>Objects</button><button>Messages</button><button>Help</button></nav>
      <section class="banner">
        <div class="user"><h2>Admin</h2><p>(Administrator)</p></div>
        <div class="quick">
          <button aria-label="Log out">${exitIcon()}</button><button aria-label="Settings">${gearIcon()}</button>
          <button aria-label="Help">${helpIcon()}</button><button aria-label="About">${aboutIcon()}</button><button aria-label="Shut down">${powerIcon()}</button>
        </div>
        <ul class="counters"><li>Objects:  6</li><li><a href="#alarms">New alarms: 0</a></li><li><a href="#messages">Messages:  264</a></li></ul>
        <div class="modem">${towerIcon()}
          <dl><dt>${waveIcon()}MTS-RUS</dt><dd>Balance:  58,35</dd></dl>
          <div class="links">${antennaIcon()}${serialIcon()}${globeIcon()}</div>
        </div>
        <div class="clock"><p>Вс, 15.10.2017</p><p>15:44</p></div>
      </section>`;
  }

  private side() {
    return html`<aside class="side">
      <div class="filter"><label for="group">Objects</label>
        <div class="combo"><div class="pick"><select id="group"><option>&lt;All&gt;</option></select>
          ${icon(14, 8, "0 0 14 8", svg`<path d="M0 0H14L7 8Z" fill="#000"/>`)}</div><button class="more" aria-label="Choose group">...</button></div>
      </div>
      <div class="search"><button aria-label="Find">${binoculars()}</button><input type="text" aria-label="Search objects"><button aria-label="Apply">${check()}</button></div>
      <div class="tools"><button>${plusDot()}Add</button><button>${copyIcon()}Copy</button><button>${editIcon()}Edit</button></div>
      <ul class="list">${objects.map((o, i) => html`<li><button class=${classMap({ on: i === this.selected })} @click=${() => (this.selected = i)}>
        <span class="kind">${kindIcon(o.kind)}</span>${shield(o.status)}<span>${o.name}</span></button></li>`)}</ul>
      <ul class="legend">${legend.map(([s, label]) => html`<li>${shield(s)}<span>- ${label}</span></li>`)}</ul>
    </aside>`;
  }

  private row(m: Message, i: number) {
    return html`<tr class=${classMap({ alarm: !!m.alarm })}>
      <td class="grip">${i === 0 ? icon(6, 10, "0 0 6 10", svg`<path d="M0 0L6 5L0 10Z" fill="#000"/>`) : nothing}</td>
      <td class="pic">${m.alarm ? replyDot() : nothing}</td><td class="pic">${m.alarm ? siren() : infoDot()}</td>
      <td>${m.object}</td><td>${m.phone ?? nothing}</td><td></td><td>${m.time}</td><td>${m.text}</td></tr>`;
  }

  private main() {
    return html`<main class="main">
      <div class="tabs" role="tablist">${tabs.map(([name, pic]) => html`<button role="tab" aria-selected=${name === this.tab}
        class=${classMap({ on: name === this.tab, tight: name === "Statistics" || name === "Map" })} @click=${() => (this.tab = name)}>${pic()}${name}</button>`)}</div>
      <div class="setting"><button>${screwdriver()}Cards setting</button></div>
      <section class="deck">
        <div class="cards">${objects.map((o, i) => html`<object-card .item=${o} ?current=${i === this.selected}></object-card>`)}</div>
        <scroll-rail .thumb=${45}></scroll-rail>
      </section>
      <section class="bottom">
        <div class="log">
          <div class="sheet"><table>
            <thead><tr>
              <th class="c0">${icon(31, 14, "0 0 31 14", svg`<path d="M0 1.5H31M0 4.5H31M0 7.5H31M0 10.5H31" stroke="#000"/>`)}</th><th class="c1"></th><th class="c2"></th>
              <th class="c3">Object</th><th class="c4">Device phone</th><th class="c5">Recipient</th>
              <th class="c6"><span class="sorted">Date/Time ${icon(13, 12, "0 0 13 12", svg`<path d="M12.5 .5H.5L6.5 11.5" fill="none" stroke="#999"/><path d="M12.5 .5L6.5 11.5" stroke="#fff"/>`)}</span></th>
              <th>Message Text</th></tr></thead>
            <tbody>${messages.map((m, i) => this.row(m, i))}</tbody>
          </table></div>
          <scroll-rail .thumb=${12}></scroll-rail>
        </div>
        <div class="pan"><button class="funnel" aria-label="Filter">${icon(22, 22, "0 0 22 22", svg`<path d="M0 1H22L13 11V22L9 19V11Z" fill="#b9d9ea"/>`)}</button><scroll-rail axis="x"></scroll-rail></div>
      </section>
    </main>`;
  }

  render() {
    return html`<div class="window">${this.header()}
      <div class="work">${this.side()}${this.main()}</div>
      <footer class="status"><span>COM3 :  MTS-RUS</span><span>Signal level:  81%</span><span>Balance:  58,35</span><span>Objects:  6</span><span>Messages:  264</span><span class="time">15:44</span><span class="end">[WEB] Modem is working properly${icon(18, 18, "0 0 18 18", svg`<path d="M0 18L18 0M6 18L18 6M12 18L18 12" stroke="#cfe2ec" stroke-width="2.4"/>`)}</span></footer>
    </div>`;
  }
}
